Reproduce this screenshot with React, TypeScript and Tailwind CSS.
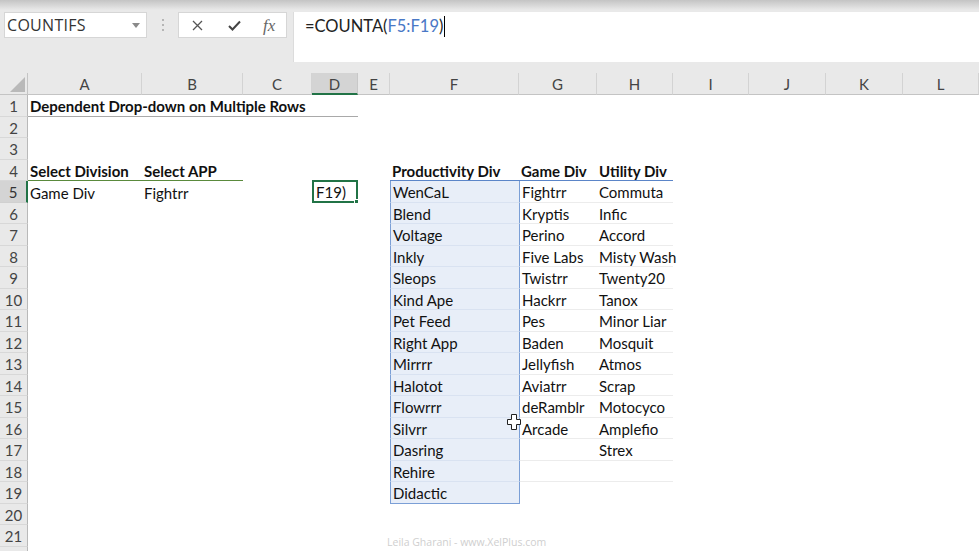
import React from 'react'

const COLS = ['A', 'B', 'C', 'D', 'E', 'F', 'G', 'H', 'I', 'J', 'K', 'L']

const prod = ['WenCaL', 'Blend', 'Voltage', 'Inkly', 'Sleops', 'Kind Ape', 'Pet Feed', 'Right App', 'Mirrrr', 'Halotot', 'Flowrrr', 'Silvrr', 'Dasring', 'Rehire', 'Didactic']
const game = ['Fightrr', 'Kryptis', 'Perino', 'Five Labs', 'Twistrr', 'Hackrr', 'Pes', 'Baden', 'Jellyfish', 'Aviatrr', 'deRamblr', 'Arcade']
const util = ['Commuta', 'Infic', 'Accord', 'Misty Wash', 'Twenty20', 'Tanox', 'Minor Liar', 'Mosquit', 'Atmos', 'Scrap', 'Motocyco', 'Amplefio', 'Strex']

type Cell = { text?: string; bold?: boolean; cls: string; box?: boolean }

function cellAt(r: number, c: string): Cell {
  const cell: Cell = { cls: '' }
  if (r === 1) {
    if (c === 'A') { cell.text = 'Dependent Drop-down on Multiple Rows'; cell.bold = true }
    if (['A', 'B', 'C', 'D'].includes(c)) cell.cls = 'border-b border-[#a9a9a9]'
  }
  if (r === 4) {
    if (c === 'A') { cell.text = 'Select Division'; cell.bold = true }
    if (c === 'B') { cell.text = 'Select APP'; cell.bold = true }
    if (c === 'A' || c === 'B') cell.cls = 'border-b border-[#5a8a3c]'
    if (c === 'F') { cell.text = 'Productivity Div'; cell.bold = true }
    if (c === 'G') { cell.text = 'Game Div'; cell.bold = true }
    if (c === 'H') { cell.text = 'Utility Div'; cell.bold = true }
    if (['F', 'G', 'H'].includes(c)) cell.cls = 'border-b border-[#5b85c8]'
  }
  if (r === 5) {
    if (c === 'A') cell.text = 'Game Div'
    if (c === 'B') cell.text = 'Fightrr'
    if (c === 'D') { cell.text = 'F19)'; cell.box = true }
  }
  if (r >= 5 && r <= 19) {
    if (c === 'F') {
      cell.text = prod[r - 5]
      cell.cls = r === 19
        ? 'bg-[#e8eef8] border-l border-b border-[#7b9fd6]'
        : 'bg-[#e8eef8] border-l border-[#7b9fd6] border-b border-b-[#d9e2f1]'
    }
    if (c === 'G') {
      cell.text = game[r - 5]
      cell.cls = r <= 18 ? 'border-l border-[#7b9fd6] border-b border-b-[#ececec]' : 'border-l border-[#7b9fd6]'
    }
    if (c === 'H') {
      cell.text = util[r - 5]
      if (r <= 18) cell.cls = 'border-b border-[#ececec]'
    }
  }
  return cell
}

export default function App() {
  const rows = Array.from({ length: 22 }, (_, i) => i + 1)
  return (
    <div className="relative w-[979px] h-[551px] overflow-hidden bg-white text-[#111]" style={{ fontFamily: 'Lato, "Open Sans", sans-serif' }}>
      {/* ribbon edge */}
      <div className="h-[10px] bg-gradient-to-b from-[#c4c4c4] to-[#e9e9e9]" />

      {/* formula bar */}
      <div className="h-[63px] bg-[#e9e9e9] flex items-start pt-[2px]">
        <div className="ml-[4px] w-[143px] h-[26px] bg-white border border-[#d6d6d6] flex items-center pl-[2px] pr-[6px]">
          <span className="flex-1 text-[16px] text-[#333] tracking-[0.3px]" style={{ fontFamily: '"Open Sans", sans-serif' }}>COUNTIFS</span>
          <svg width="8" height="5" viewBox="0 0 8 5"><path d="M0 0h8L4 5z" fill="#8a8a8a" /></svg>
        </div>
        <div className="w-[31px] h-[26px] flex flex-col items-center justify-center gap-[3px]">
          <span className="w-[2px] h-[2px] bg-[#b5b5b5]" />
          <span className="w-[2px] h-[2px] bg-[#b5b5b5]" />
          <span className="w-[2px] h-[2px] bg-[#b5b5b5]" />
        </div>
        <div className="w-[109px] h-[26px] bg-white border border-[#d6d6d6] flex items-center">
          <div className="w-[38px] flex justify-center">
            <svg width="11" height="11" viewBox="0 0 11 11"><path d="M1 1l9 9M10 1l-9 9" stroke="#555" strokeWidth="1.3" /></svg>
          </div>
          <div className="w-[36px] flex justify-center">
            <svg width="13" height="11" viewBox="0 0 13 11"><path d="M1 6l3.5 3.5L12 1.5" stroke="#444" strokeWidth="2" fill="none" /></svg>
          </div>
          <div className="w-[34px] flex justify-center">
            <span className="italic text-[17px] text-[#666] leading-none" style={{ fontFamily: '"Liberation Serif", serif' }}>fx</span>
          </div>
        </div>
        <div className="ml-[6px] flex-1 h-[50px] bg-white border-l border-[#dcdcdc] pl-[11px] pt-[2px]">
          <div className="flex items-center text-[16.5px] text-[#222]">
            <span>=COUNTA(</span>
            <span className="text-[#4a78c6]">F5:F19</span>
            <span>)</span>
            <span className="ml-[1px] w-px h-[21px] bg-black" />
          </div>
        </div>
      </div>

      {/* sheet */}
      <div className="grid grid-cols-[28px_114px_101px_69px_46px_32px_129px_78px_76px_76px_77px_77px_76px] grid-rows-[22px_repeat(22,21.5px)] text-[15px]">
        <div className="bg-[#e9e9e9] border-r border-b border-[#c4c4c4] flex items-end justify-end p-[2px]">
          <svg width="15" height="15" viewBox="0 0 15 15"><path d="M15 0V15H0z" fill="#b9b9b9" /></svg>
        </div>
        {COLS.map((c) => (
          <div
            key={c}
            className={
              c === 'D'
                ? 'bg-[#d4d4d4] border-b-2 border-b-[#217346] border-r border-r-[#c8c8c8] flex items-center justify-center pt-[2px] text-[#444]'
                : 'bg-[#e9e9e9] border-b border-b-[#c4c4c4] border-r border-r-[#d3d3d3] flex items-center justify-center pt-[1px] text-[#444]'
            }
          >
            {c}
          </div>
        ))}
        {rows.map((r) => (
          <React.Fragment key={r}>
            <div
              className={
                r === 5
                  ? 'bg-[#d4d4d4] border-r-2 border-r-[#217346] border-b border-b-[#d0d0d0] flex items-center justify-center pt-[2px] text-[#333]'
                  : 'bg-[#e9e9e9] border-r border-r-[#b9b9b9] border-b border-b-[#d8d8d8] flex items-center justify-center pt-[2px] text-[#444]'
              }
            >
              {r < 22 ? r : ''}
            </div>
            {COLS.map((c) => {
              const cell = cellAt(r, c)
              if (cell.box) {
                return (
                  <div key={c} className="relative -mt-px border-2 border-[#217346] flex items-center pl-[2px] pt-[2px]">
                    <span className="whitespace-nowrap">{cell.text}</span>
                    <span className="absolute -right-[3px] -bottom-[3px] w-[5px] h-[5px] bg-[#217346] border border-white" />
                  </div>
                )
              }
              return (
                <div key={c} className={`relative flex items-center pl-[2px] pt-[2px] ${cell.cls}`}>
                  {cell.text && (
                    <span className={`whitespace-nowrap ${cell.bold ? 'font-bold' : ''}`}>{cell.text}</span>
                  )}
                </div>
              )
            })}
          </React.Fragment>
        ))}
      </div>

      {/* mouse cursor over the sheet */}
      <svg className="absolute left-[507px] top-[414px]" width="14" height="16" viewBox="0 0 14 16">
        <path d="M4.5 0.5h5v5h4v5h-4v5h-5v-5h-4v-5h4z" fill="#fff" stroke="#222" strokeWidth="1" />
      </svg>

      {/* watermark */}
      <div className="absolute left-[387px] top-[535px] text-[10.5px] text-[#cfcfcf]" style={{ fontFamily: '"Open Sans", sans-serif' }}>
        Leila Gharani - www.XelPlus.com
      </div>
    </div>
  )
}
